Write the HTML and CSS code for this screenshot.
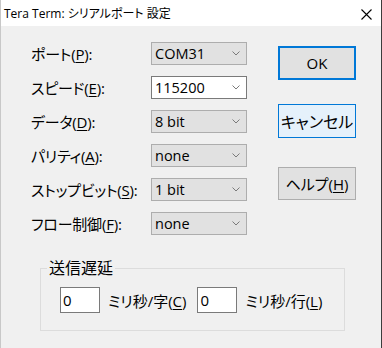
FILE: index.html
```html
<!DOCTYPE html>
<html lang="ja">
<head>
    <meta charset="UTF-8">
    <title>Tera Term: シリアルポート 設定</title>
    <link rel="stylesheet" href="styles.css">
</head>
<body>
    <div class="window">
        <div class="titlebar">
            <span class="title">Tera Term: シリアルポート 設定</span>
            <svg class="close" width="11" height="11" viewBox="0 0 11 11">
                <path d="M0.5 0.5 L10.5 10.5 M10.5 0.5 L0.5 10.5" stroke="#000" stroke-width="1.1" fill="none"/>
            </svg>
        </div>
        <div class="client">
            <div class="top">
                <div class="fields">
                    <label>ポート(<u>P</u>):</label>
                    <div class="combo"><span>COM31</span><svg class="chev" width="8" height="5" viewBox="0 0 8 5"><path d="M0.5 0.5 L4 4 L7.5 0.5" stroke="#7a7a7a" fill="none"/></svg></div>

                    <label>スピード(<u>E</u>):</label>
                    <div class="combo edit"><span>115200</span><svg class="chev" width="8" height="5" viewBox="0 0 8 5"><path d="M0.5 0.5 L4 4 L7.5 0.5" stroke="#7a7a7a" fill="none"/></svg></div>

                    <label>データ(<u>D</u>):</label>
                    <div class="combo"><span>8 bit</span><svg class="chev" width="8" height="5" viewBox="0 0 8 5"><path d="M0.5 0.5 L4 4 L7.5 0.5" stroke="#7a7a7a" fill="none"/></svg></div>

                    <label>パリティ(<u>A</u>):</label>
                    <div class="combo"><span>none</span><svg class="chev" width="8" height="5" viewBox="0 0 8 5"><path d="M0.5 0.5 L4 4 L7.5 0.5" stroke="#7a7a7a" fill="none"/></svg></div>

                    <label>ストップビット(<u>S</u>):</label>
                    <div class="combo"><span>1 bit</span><svg class="chev" width="8" height="5" viewBox="0 0 8 5"><path d="M0.5 0.5 L4 4 L7.5 0.5" stroke="#7a7a7a" fill="none"/></svg></div>

                    <label>フロー制御(<u>F</u>):</label>
                    <div class="combo"><span>none</span><svg class="chev" width="8" height="5" viewBox="0 0 8 5"><path d="M0.5 0.5 L4 4 L7.5 0.5" stroke="#7a7a7a" fill="none"/></svg></div>
                </div>
                <div class="buttons">
                    <button class="btn default" type="button">OK</button>
                    <button class="btn focus" type="button">キャンセル</button>
                    <button class="btn help" type="button">ヘルプ(<u>H</u>)</button>
                </div>
            </div>
            <fieldset class="group">
                <legend>送信遅延</legend>
                <div class="delay-row">
                    <input class="num" type="text" value="0">
                    <span class="unit">ミリ秒/字(<u>C</u>)</span>
                    <input class="num second" type="text" value="0">
                    <span class="unit">ミリ秒/行(<u>L</u>)</span>
                </div>
            </fieldset>
        </div>
    </div>
</body>
</html>
```

FILE: styles.css
```css
body {
    margin: 0;
    font-family: "Open Sans", "Noto Sans CJK JP", sans-serif;
    font-feature-settings: "palt";
    color: #000;
}
.window {
    width: 382px;
    height: 348px;
    box-sizing: border-box;
    border-right: 1px solid #3c3c3c;
    border-left: 1px solid #c8c8c8;
    background-color: #f0f0f0;
    overflow: hidden;
}
.titlebar {
    height: 26px;
    background-color: #fff;
    display: flex;
    align-items: center;
    justify-content: space-between;
    padding: 0 9px 0 3px;
}
.title {
    font-size: 12px;
}
.close {
    margin-top: 2px;
}
.client {
    padding: 16px 0 0 30px;
}
.top {
    display: flex;
    align-items: flex-start;
}
.fields {
    display: grid;
    grid-template-columns: 120px 96px;
    grid-auto-rows: 23px;
    row-gap: 11px;
    align-items: center;
    font-size: 15px;
}
label {
    white-space: nowrap;
    letter-spacing: -0.2px;
}
u {
    text-decoration-thickness: 1px;
    text-underline-offset: 2px;
}
.combo {
    height: 23px;
    box-sizing: border-box;
    border: 1px solid #adadad;
    background-color: #e1e1e1;
    display: flex;
    align-items: center;
    justify-content: space-between;
    padding: 0 6px 0 3px;
    font-size: 14.5px;
}
.combo.edit {
    background-color: #fff;
    border-color: #7a7a7a;
}
.buttons {
    display: flex;
    flex-direction: column;
    margin-left: 31px;
    margin-top: 4px;
}
.btn {
    width: 78px;
    height: 34px;
    box-sizing: border-box;
    background-color: #e1e1e1;
    border: 1px solid #adadad;
    font-family: "Open Sans", "Noto Sans CJK JP", sans-serif;
    font-feature-settings: "palt";
    font-size: 15px;
    padding: 0;
    color: #000;
}
.btn.default {
    border: 2px solid #0078d7;
}
.btn.focus {
    margin-top: 24px;
    background-color: #e5f1fb;
    border-color: #0078d7;
    font-size: 16px;
}
.btn.help {
    margin-top: 29px;
    height: 33px;
}
.group {
    margin: 23px 0 0 9px;
    width: 305px;
    box-sizing: border-box;
    border: 1px solid #dcdcdc;
    padding: 9px 0 16px 19px;
    height: 73px;
}
.group legend {
    font-size: 16px;
    line-height: 20px;
    padding: 0 2px;
    margin-left: -13px;
}
.delay-row {
    display: flex;
    align-items: center;
    font-size: 15px;
}
.num {
    width: 40px;
    height: 26px;
    box-sizing: border-box;
    border: 1px solid #7a7a7a;
    background-color: #fff;
    padding: 0 2px;
    font-family: "Open Sans", "Noto Sans CJK JP", sans-serif;
    font-size: 15px;
    margin: 0;
}
.unit {
    margin-left: 8px;
    white-space: nowrap;
}
.num.second {
    margin-left: 11px;
}
```
